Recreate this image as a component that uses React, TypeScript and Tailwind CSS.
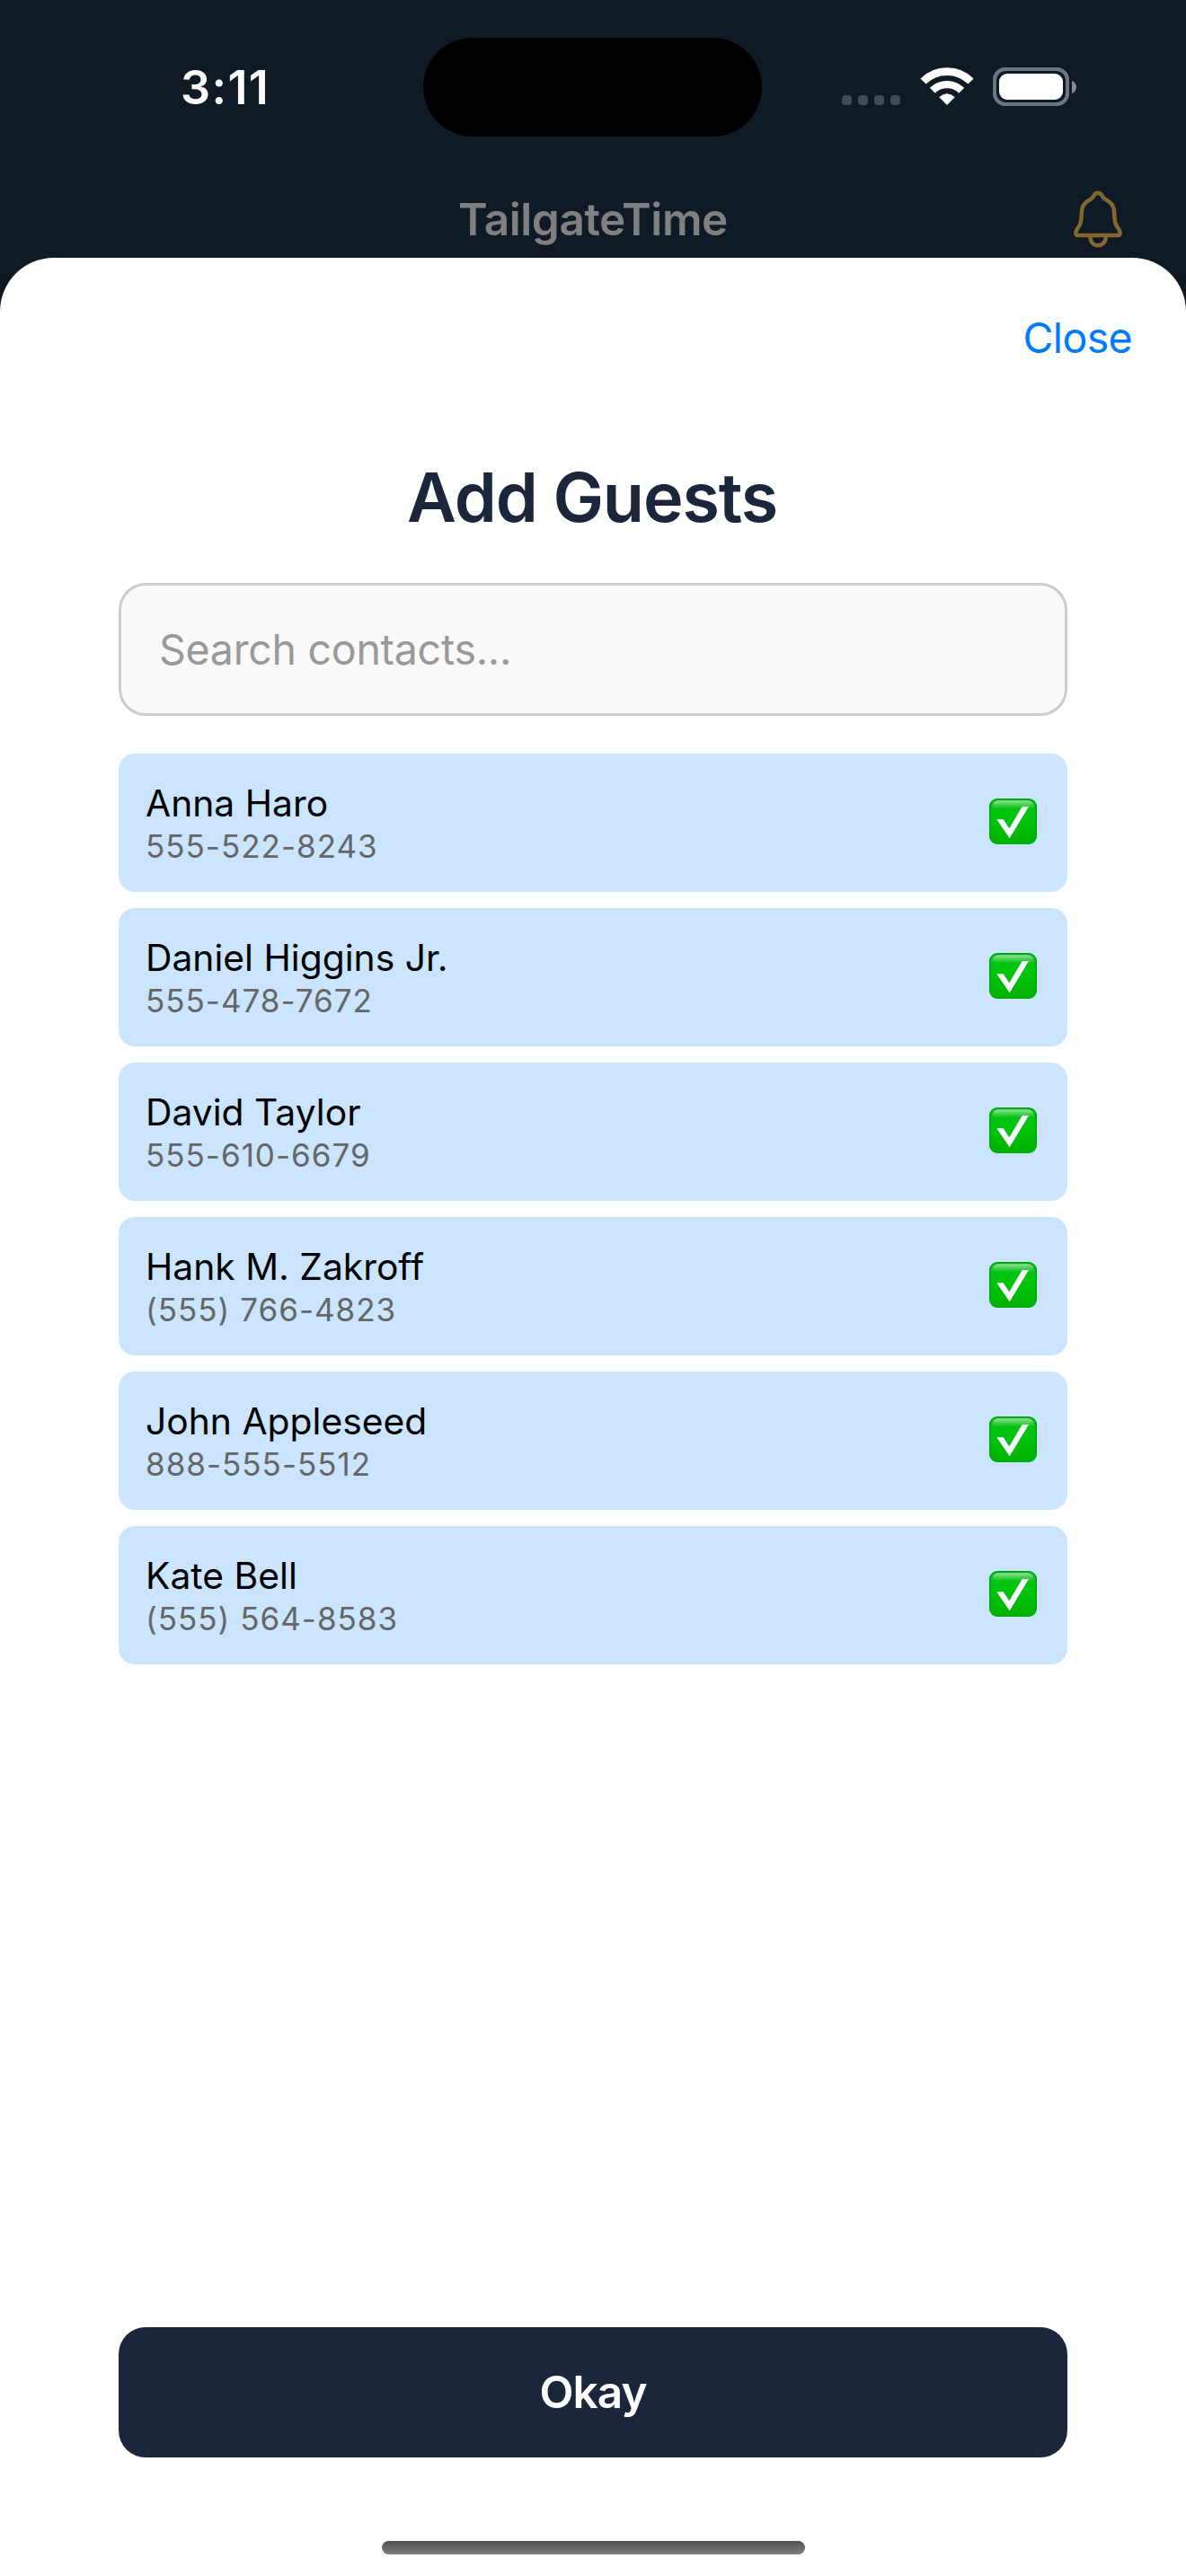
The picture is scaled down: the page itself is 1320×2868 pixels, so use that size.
type Contact = { name: string; phone: string };

const contacts: Contact[] = [
  { name: "Anna Haro", phone: "555-522-8243" },
  { name: "Daniel Higgins Jr.", phone: "555-478-7672" },
  { name: "David Taylor", phone: "555-610-6679" },
  { name: "Hank M. Zakroff", phone: "(555) 766-4823" },
  { name: "John Appleseed", phone: "888-555-5512" },
  { name: "Kate Bell", phone: "(555) 564-8583" },
];

function CellularDots() {
  return (
    <div className="flex gap-[7px]">
      {[0, 1, 2, 3].map((i) => (
        <span key={i} className="size-[11px] rounded-[4px] bg-[#434b54]" />
      ))}
    </div>
  );
}

function WifiIcon() {
  return (
    <svg className="h-[43px] w-[60px]" viewBox="0 0 60 43" fill="none">
      <path d="M3.5 15.5A37.6 37.6 0 0 1 56.5 15.5" stroke="#fff" strokeWidth="8.8" />
      <path d="M13.8 25.8A23 23 0 0 1 46.2 25.8" stroke="#fff" strokeWidth="8.4" />
      <path
        d="M30 41.4L21.8 33.2Q30 26.4 38.2 33.2Z"
        fill="#fff"
        stroke="#fff"
        strokeWidth="1"
        strokeLinejoin="round"
      />
    </svg>
  );
}

function BatteryIcon() {
  return (
    <div className="flex items-center gap-[3px]">
      <div className="h-[43px] w-[85px] rounded-[14px] border-4 border-[#70767e] p-[3px]">
        <div className="h-full rounded-[9px] bg-white" />
      </div>
      <svg className="h-[14px] w-[5px]" viewBox="0 0 5 14">
        <path d="M0 0C3 1 5 4 5 7S3 13 0 14Z" fill="#878c92" />
      </svg>
    </div>
  );
}

function BellIcon() {
  return (
    <svg
      className="h-[68px] w-[60px]"
      viewBox="96 60 180 204"
      fill="none"
      stroke="#80682f"
      strokeWidth="13.5"
      strokeLinecap="round"
      strokeLinejoin="round"
    >
      <path d="M186 74C178 74 174 79 171 86C168 93 163 95 157 98C142 106 133 118 132 134C131 150 131 165 127 177C123 189 112 197 112 207C112 213 114 216 120 216H252C258 216 260 213 260 207C260 197 249 189 245 177C241 165 241 150 240 134C239 118 230 106 215 98C209 95 204 93 201 86C198 79 194 74 186 74Z" />
      <path d="M160 218C160 237 170 250 186 250C202 250 213 237 213 218" />
    </svg>
  );
}

function CheckBadge() {
  return (
    <svg className="mb-[3px] h-[51px] w-[53px]" viewBox="0 0 159 153" role="img" aria-label="Selected">
      <defs>
        <linearGradient id="badge" x1="0" y1="0" x2="0" y2="1">
          <stop offset="0" stopColor="#06bb14" />
          <stop offset="0.35" stopColor="#00c70f" />
          <stop offset="1" stopColor="#00b200" />
        </linearGradient>
        <linearGradient id="rim" x1="0" y1="0" x2="0" y2="1">
          <stop offset="0" stopColor="#069a10" />
          <stop offset="1" stopColor="#04a80c" />
        </linearGradient>
        <linearGradient id="gloss" x1="0" y1="0" x2="0" y2="1">
          <stop offset="0" stopColor="#fff" stopOpacity="0.55" />
          <stop offset="1" stopColor="#fff" stopOpacity="0" />
        </linearGradient>
      </defs>
      <rect x="2" y="2" width="155" height="149" rx="25" fill="url(#badge)" stroke="url(#rim)" strokeWidth="4" />
      <path d="M10 34V28Q10 7 32 7H127Q149 7 149 28V34Z" fill="url(#gloss)" />
      <path d="M25 70H47L67 100L110 27H132L68 133Z" fill="#fff" />
    </svg>
  );
}

function ContactRow({ name, phone }: Contact) {
  return (
    <li className="flex h-[154px] items-center justify-between rounded-[18px] bg-[#cce5ff] pr-[34px] pl-[30px]">
      <div className="pt-0.5">
        <p className="text-[40.8px] leading-[50px] text-black">{name}</p>
        <p className="text-[35px] leading-[46px] tracking-[1px] text-[#666]">{phone}</p>
      </div>
      <CheckBadge />
    </li>
  );
}

export default function App() {
  return (
    <div className="flex h-[2868px] w-[1320px] flex-col overflow-hidden bg-[#101a26] font-[Inter,sans-serif]">
      <div className="flex h-[196px] shrink-0 items-center pl-[201px]">
        <span className="w-[270px] text-[52px] leading-[64px] font-semibold tracking-[1.4px] text-white">3:11</span>
        <div className="mb-0.5 h-[110px] w-[377px] rounded-full bg-black" />
        <div className="mb-[3px] ml-[89px] flex items-end">
          <div className="pb-px">
            <CellularDots />
          </div>
          <div className="ml-[22px]">
            <WifiIcon />
          </div>
          <div className="ml-[21px]">
            <BatteryIcon />
          </div>
        </div>
      </div>

      <header className="grid h-[91px] shrink-0 grid-cols-[1fr_auto_1fr] items-start pt-3.5">
        <h1 className="col-start-2 pt-0.5 text-[49.5px] leading-[64px] font-semibold tracking-[-0.4px] text-[#808080]">
          TailgateTime
        </h1>
        <div className="flex justify-end pr-[68px]">
          <BellIcon />
        </div>
      </header>

      <div className="flex-1 bg-[linear-gradient(#101a26_15px,#0e1822_16px)]">
        <main className="flex h-full flex-col rounded-t-[60px] bg-white pt-[59px]">
          <button className="mr-[60px] self-end text-[46.5px] leading-[60px] tracking-[-0.66px] text-[#007aff]">
            Close
          </button>

          <div className="flex flex-1 flex-col px-[132px]">
            <h2 className="mt-[103px] pr-0.5 text-center text-[75.5px] leading-[90px] font-semibold tracking-[-1.15px] text-[#1c263a]">
              Add Guests
            </h2>

            <input
              className="mt-[50px] h-[148px] w-full rounded-[30px] border-3 border-[#ccc] bg-[#f9f9f9] px-[42px] text-[46.5px] tracking-[-0.27px] placeholder:text-[#999] placeholder:opacity-100"
              placeholder="Search contacts..."
            />

            <ul className="mt-[42px] flex flex-col gap-[18px]">
              {contacts.map((c) => (
                <ContactRow key={c.name} {...c} />
              ))}
            </ul>

            <button className="mt-auto h-[145px] rounded-[30px] bg-[#1c263a] text-[49.5px] font-semibold tracking-[-0.94px] text-white">
              Okay
            </button>
          </div>

          <div className="mt-[93px] mb-6 h-[15px] w-[471px] self-center rounded-full bg-linear-to-b from-[#505050] to-[#808080]" />
        </main>
      </div>
    </div>
  );
}
